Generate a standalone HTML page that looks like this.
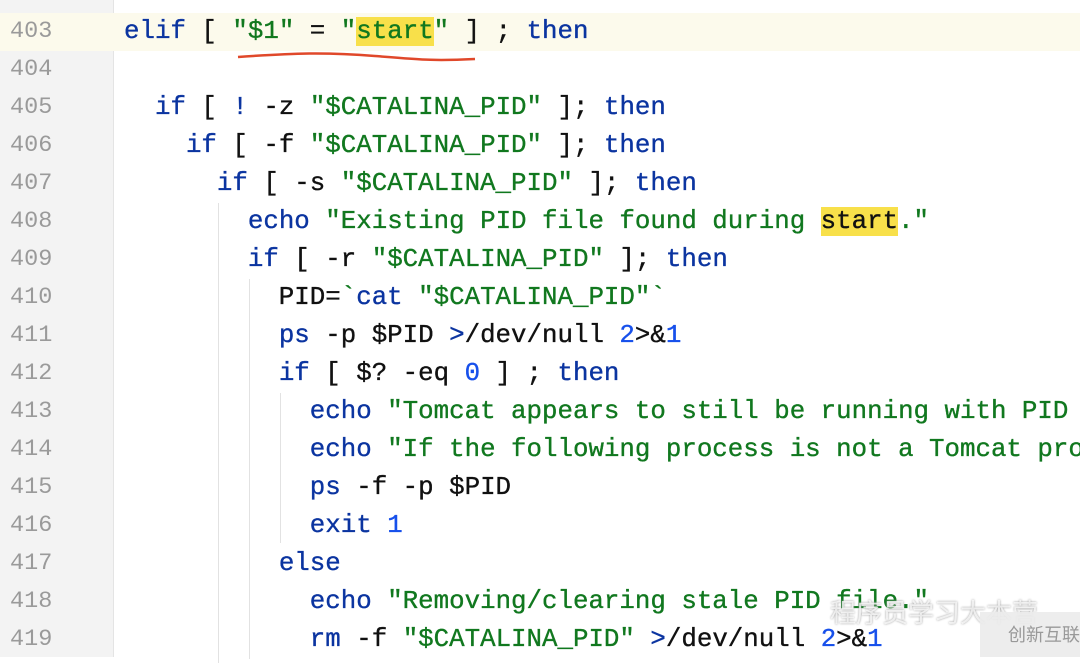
<!DOCTYPE html><html><head><style>
body{margin:0;width:1080px;height:657px;overflow:hidden;background:#fff;position:relative;font-family:"Liberation Mono",monospace;}
.g{position:absolute;left:0;top:0;width:113px;height:657px;background:#f3f3f3;border-right:1px solid #e4e4e4}
.row{position:absolute;left:0;width:1080px;height:38px;line-height:38px;font-size:25.8px;white-space:pre;color:#111;-webkit-text-stroke:0.35px currentColor}
.n{position:absolute;left:10px;color:#9a9a9a;font-size:23.5px;-webkit-text-stroke:0}
.c{position:absolute;left:124px}
.k{color:#0b34a0}.s{color:#11781f}.d{color:#1750eb}
.h{background:#f8e04a}
.cur{background:#fcfaec}
.ig{position:absolute;width:1px;background:#e2e2e2}
</style></head><body>
<div class="g"></div>
<div class="row cur" style="top:13px"></div>
<div class="ig" style="left:218px;top:203px;height:460px"></div>
<div class="ig" style="left:249px;top:279px;height:380px"></div>
<div class="ig" style="left:280px;top:393px;height:150px"></div>
<div class="row" style="top:-25px"><span class="n">402</span></div>
<div class="row" style="top:13px"><span class="n">403</span><span class="c"><span class="k">elif</span> [ <span class="s">"$1"</span> = <span class="s">"<span class="h">start</span>"</span> ] ; <span class="k">then</span></span></div>
<div class="row" style="top:51px"><span class="n">404</span></div>
<div class="row" style="top:89px"><span class="n">405</span><span class="c">  <span class="k">if</span> [ <span class="k">!</span> -z <span class="s">"$CATALINA_PID"</span> ]; <span class="k">then</span></span></div>
<div class="row" style="top:127px"><span class="n">406</span><span class="c">    <span class="k">if</span> [ -f <span class="s">"$CATALINA_PID"</span> ]; <span class="k">then</span></span></div>
<div class="row" style="top:165px"><span class="n">407</span><span class="c">      <span class="k">if</span> [ -s <span class="s">"$CATALINA_PID"</span> ]; <span class="k">then</span></span></div>
<div class="row" style="top:203px"><span class="n">408</span><span class="c">        <span class="k">echo</span> <span class="s">"Existing PID file found during <span class="h" style="color:#111">start</span>."</span></span></div>
<div class="row" style="top:241px"><span class="n">409</span><span class="c">        <span class="k">if</span> [ -r <span class="s">"$CATALINA_PID"</span> ]; <span class="k">then</span></span></div>
<div class="row" style="top:279px"><span class="n">410</span><span class="c">          PID=<span class="s">`<span class="k">cat</span> "$CATALINA_PID"`</span></span></div>
<div class="row" style="top:317px"><span class="n">411</span><span class="c">          <span class="k">ps</span> -p $PID <span class="k">&gt;</span>/dev/null <span class="d">2</span>&gt;&amp;<span class="d">1</span></span></div>
<div class="row" style="top:355px"><span class="n">412</span><span class="c">          <span class="k">if</span> [ $? -eq <span class="d">0</span> ] ; <span class="k">then</span></span></div>
<div class="row" style="top:393px"><span class="n">413</span><span class="c">            <span class="k">echo</span> <span class="s">"Tomcat appears to still be running with PID</span></span></div>
<div class="row" style="top:431px"><span class="n">414</span><span class="c">            <span class="k">echo</span> <span class="s">"If the following process is not a Tomcat pro</span></span></div>
<div class="row" style="top:469px"><span class="n">415</span><span class="c">            <span class="k">ps</span> -f -p $PID</span></div>
<div class="row" style="top:507px"><span class="n">416</span><span class="c">            <span class="k">exit</span> <span class="d">1</span></span></div>
<div class="row" style="top:545px"><span class="n">417</span><span class="c">          <span class="k">else</span></span></div>
<div class="row" style="top:583px"><span class="n">418</span><span class="c">            <span class="k">echo</span> <span class="s">"Removing/clearing stale PID file."</span></span></div>
<div class="row" style="top:621px"><span class="n">419</span><span class="c">            <span class="k">rm</span> -f <span class="s">"$CATALINA_PID"</span> <span class="k">&gt;</span>/dev/null <span class="d">2</span>&gt;&amp;<span class="d">1</span></span></div>
<svg style="position:absolute;left:235px;top:50px" width="245" height="16"><path d="M3 7 C60 3 90 2 140 6 S200 11 240 9" stroke="#e0482a" stroke-width="2.5" fill="none"/></svg>
<div style="position:absolute;left:830px;top:593px;font:26px 'Noto Sans CJK SC',sans-serif;color:rgba(255,255,255,0.75);text-shadow:0 0 2px #999">程序员学习大本营</div>
<div style="position:absolute;left:980px;top:612px;width:100px;height:45px;background:rgba(235,235,235,0.9);font:18px 'Noto Sans CJK SC',sans-serif;color:#999;line-height:45px;padding-left:28px;box-sizing:border-box">创新互联</div>
</body></html>
